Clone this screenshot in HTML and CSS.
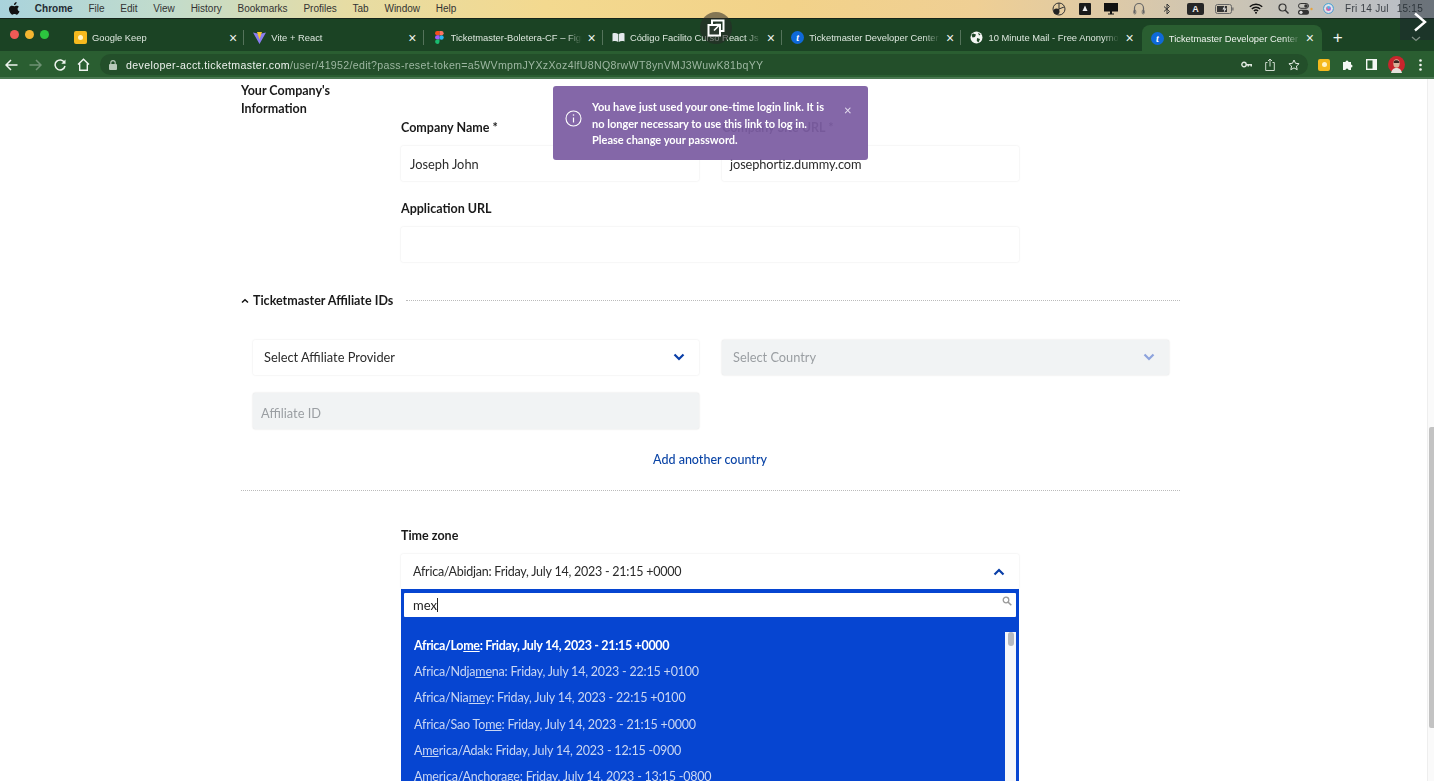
FILE: index.html
```html
<!DOCTYPE html>
<html lang="en">
<head>
<meta charset="utf-8">
<title>Ticketmaster Developer Center</title>
<link rel="stylesheet" href="styles.css">
</head>
<body>
<div class="screen">
  <header class="menubar">
    <nav class="menu-left">
      <svg class="apple" width="11" height="13" viewBox="0 0 12 14"><path d="M8.300 0c.1 1-.3 1.800-.8 2.400-.6.600-1.300 1-2.100.9-.1-.9.300-1.800.8-2.300C6.800.4 7.600 0 8.300 0zM11.500 10.200c-.3.700-.5 1-.9 1.600-.6.800-1.300 1.900-2.300 1.900-.9 0-1.100-.6-2.300-.6s-1.500.6-2.300.6c-1 0-1.700-1-2.300-1.800C-.2 9.500-.4 6.900.5 5.500c.6-1 1.700-1.600 2.700-1.600s1.700.6 2.600.6c.8 0 1.400-.6 2.600-.6.900 0 1.900.5 2.500 1.300-2.200 1.200-1.900 4.300.6 5z" fill="#111"/></svg>
      <b class="appname">Chrome</b>
      <span>File</span><span>Edit</span><span>View</span><span>History</span><span>Bookmarks</span><span>Profiles</span><span>Tab</span><span>Window</span><span>Help</span>
    </nav>
    <div class="menu-right">
      <svg class="st" width="14" height="14" viewBox="0 0 14 14"><circle cx="7" cy="7" r="6" fill="none" stroke="#333" stroke-width="1"/><path d="M7 1v6l5-2M7 7l-3 5" stroke="#333" fill="none"/><circle cx="4.500" cy="9.500" r="3" fill="#222"/></svg>
      <svg class="st" width="12" height="12" viewBox="0 0 12 12"><rect width="12" height="12" rx="1" fill="#1a1a1a"/><path d="M6 2.500 8.500 8h-5z" fill="#eee"/></svg>
      <svg class="st" width="14" height="12" viewBox="0 0 14 12"><path d="M0 0h14v8.500H8v2h2v1H4v-1h2v-2H0z" fill="#111"/></svg>
      <svg class="st" width="12" height="13" viewBox="0 0 12 13"><path d="M1.500 11V6a4.500 4.500 0 0 1 9 0v5" fill="none" stroke="#666" stroke-width="1.200"/><rect x=".8" y="8" width="2" height="4" rx="1" fill="none" stroke="#666" stroke-width=".8"/><rect x="9.200" y="8" width="2" height="4" rx="1" fill="none" stroke="#666" stroke-width=".8"/></svg>
      <svg class="st" width="8" height="12" viewBox="0 0 8 12"><path d="M1 3.500 6.500 8.500 4 11V1l2.500 2.500L1 8.500" fill="none" stroke="#333" stroke-width="1"/></svg>
      <span class="ime">A</span>
      <svg class="st" width="19" height="10" viewBox="0 0 19 10"><rect x=".5" y=".5" width="16" height="9" rx="2" fill="none" stroke="#666"/><rect x="2" y="2" width="10" height="6" fill="#333"/><rect x="17.300" y="3.500" width="1.200" height="3" fill="#666"/><path d="M10 1 7.500 5.500h2L8.500 9l3-4.500h-2z" fill="#eee"/></svg>
      <svg class="st" width="14" height="11" viewBox="0 0 14 11"><path d="M.8 3.800a9 9 0 0 1 12.400 0M2.800 6a6 6 0 0 1 8.400 0M4.900 8a3 3 0 0 1 4.200 0" fill="none" stroke="#111" stroke-width="1.400"/><circle cx="7" cy="9.800" r="1" fill="#111"/></svg>
      <svg class="st" width="11" height="11" viewBox="0 0 11 11"><circle cx="4.500" cy="4.500" r="3.500" fill="none" stroke="#333" stroke-width="1.200"/><path d="m7 7 3.500 3.500" stroke="#333" stroke-width="1.400"/></svg>
      <svg class="st" width="15" height="12" viewBox="0 0 15 12"><rect x=".5" y=".5" width="10" height="4.800" rx="2.400" fill="none" stroke="#333"/><circle cx="8" cy="3" r="1.800" fill="#333"/><rect y="6.800" width="11" height="5" rx="2.500" fill="#333"/><circle cx="3" cy="9.300" r="1.600" fill="#ddd"/><circle cx="13.500" cy="6" r="1.200" fill="#e8a33d"/></svg>
      <span class="siri"></span>
      <span class="clock"><span>Fri 14 Jul</span><span>15:15</span></span>
    </div>
  </header>

  <div class="tabstrip">
    <div class="lights"><i class="red"></i><i class="yellow"></i><i class="green"></i></div>
    <div class="tab"><span class="fav keep"><i></i></span><span class="title">Google Keep</span><span class="x">×</span></div>
    <div class="tab"><svg class="fav-svg" width="13" height="13" viewBox="0 0 13 13"><path d="M0 1.500 6.500 13 13 1.500 6.500 3z" fill="#8a7cf0"/><path d="M4 1h5L6.500 8.500z" fill="#f7c32e"/></svg><span class="title">Vite + React</span><span class="x">×</span></div>
    <div class="tab"><svg class="fav-svg" width="13" height="13" viewBox="0 0 9 13"><circle cx="6.500" cy="6.500" r="2.200" fill="#29b6f6"/><path d="M2.200 0H4.500v4.300H2.200a2.150 2.150 0 0 1 0-4.300z" fill="#f24e1e"/><path d="M4.500 0h2a2.150 2.150 0 0 1 0 4.300h-2z" fill="#ff7262"/><path d="M2.200 4.300H4.500v4.300H2.200a2.150 2.150 0 0 1 0-4.300z" fill="#a259ff"/><path d="M2.200 8.600H4.500v2.200a2.200 2.200 0 1 1-2.300-2.200z" fill="#1abc70"/></svg><span class="title">Ticketmaster-Boletera-CF – Figma</span><span class="x">×</span></div>
    <div class="tab"><svg class="fav-svg" width="13" height="13" viewBox="0 0 13 13"><path d="M.5 2.500C2.500 1.800 4.800 2 6.200 3v8C4.800 10 2.500 9.800.5 10.500zM12.500 2.500C10.500 1.800 8.200 2 6.800 3v8c1.400-1 3.700-1.200 5.700-.5z" fill="#e4e9ec"/></svg><span class="title">Código Facilito Curso React Js</span><span class="x">×</span></div>
    <div class="tab"><span class="tm">t</span><span class="title">Ticketmaster Developer Center</span><span class="x">×</span></div>
    <div class="tab"><svg class="fav-svg" width="13" height="13" viewBox="0 0 13 13"><circle cx="6.500" cy="6.500" r="6" fill="#f3f5f3"/><path d="M3 2.500 6 3.500 5 6 2.500 6.500 1.500 4zM7 7l3 1-1.500 3.500L6.800 10zM8 1.500l2.500 2L9 4.500z" fill="#1d4626"/></svg><span class="title">10 Minute Mail - Free Anonymous</span><span class="x">×</span></div>
    <div class="tab active"><span class="tm">t</span><span class="title">Ticketmaster Developer Center</span><span class="x">×</span></div>
    <span class="plus">+</span>
  </div>

  <div class="toolbar">
    <svg class="tb back" width="13" height="12" viewBox="0 0 13 12"><path d="M12.500 6H1.500M6 1 1 6l5 5" fill="none" stroke="#eef3ee" stroke-width="1.500"/></svg>
    <svg class="tb fwd" width="13" height="12" viewBox="0 0 13 12"><path d="M.5 6h11M7 1l5 5-5 5" fill="none" stroke="#6f9274" stroke-width="1.500"/></svg>
    <svg class="tb reload" width="12" height="12" viewBox="0 0 12 12"><path d="M10.500 3.500A5 5 0 1 0 11 7" fill="none" stroke="#eef3ee" stroke-width="1.500"/><path d="M11.500 .5v4.200H7.300z" fill="#eef3ee"/></svg>
    <svg class="tb home" width="13" height="13" viewBox="0 0 13 13"><path d="M1 6.500 6.500 1.200 12 6.500M2.700 5.500v6.800h7.600V5.500" fill="none" stroke="#eef3ee" stroke-width="1.400"/></svg>
    <div class="omnibox">
      <svg class="lock" width="8" height="10" viewBox="0 0 8 10"><rect y="4" width="8" height="6" rx="1" fill="#b9c9bb"/><path d="M1.800 4.500V2.800a2.200 2.200 0 0 1 4.400 0v1.700" fill="none" stroke="#b9c9bb" stroke-width="1.100"/></svg>
      <span class="url"><b>developer-acct.ticketmaster.com</b>/user/41952/edit?pass-reset-token=a5WVmpmJYXzXoz4lfU8NQ8rwWT8ynVMJ3WuwK81bqYY</span>
      <span class="omni-icons">
        <svg width="11" height="7" viewBox="0 0 11 7"><circle cx="3" cy="3.500" r="2.200" fill="none" stroke="#dfe8df" stroke-width="1.400"/><path d="M5 3h6v2.500H9.500V4.500H8v1H6.500V4.500H5z" fill="#dfe8df"/></svg>
        <svg width="10" height="13" viewBox="0 0 10 13"><path d="M2.500 4.500H.7v8h8.600v-8H7.500M5 8.500V1M3 3l2-2 2 2" fill="none" stroke="#cfdccf" stroke-width="1"/></svg>
        <svg width="12" height="12" viewBox="0 0 12 12"><path d="m6 1 1.500 3.300 3.600.4-2.700 2.400.8 3.600L6 8.900l-3.200 1.800.8-3.600L.9 4.700l3.600-.4z" fill="none" stroke="#e4ece4" stroke-width="1"/></svg>
      </span>
    </div>
    <div class="ext">
      <span class="fav keep big"><i></i></span>
      <svg width="12" height="12" viewBox="0 0 12 12"><path d="M1 3h2.500a1.500 1.500 0 1 1 3 0H9v2.500a1.500 1.500 0 1 1 0 3V11H6.500a1.500 1.500 0 1 0-3 0H1z" fill="#f4f7f4"/></svg>
      <svg width="11" height="11" viewBox="0 0 11 11"><rect x=".7" y=".7" width="9.600" height="9.600" fill="none" stroke="#f4f7f4" stroke-width="1.400"/><rect x="6.500" y="1" width="4" height="9" fill="#f4f7f4"/></svg>
      <svg class="avatar" width="17" height="17" viewBox="0 0 17 17"><circle cx="8.500" cy="8.500" r="8.500" fill="#c8252c"/><ellipse cx="8.500" cy="7.500" rx="3.200" ry="4.200" fill="#d9b49a"/><path d="M5.500 6c.5-2.500 5-2.500 6 0l-.5 1H6z" fill="#3a2620"/><path d="M3 17c1-4 3-5 5.500-5s4.500 1 5.500 5z" fill="#e5e2dc"/></svg>
      <svg class="dots-v" width="3" height="12" viewBox="0 0 3 12"><circle cx="1.500" cy="1.500" r="1.300" fill="#f4f7f4"/><circle cx="1.500" cy="6" r="1.300" fill="#f4f7f4"/><circle cx="1.500" cy="10.500" r="1.300" fill="#f4f7f4"/></svg>
    </div>
  </div>

  <main class="viewport">
    <div class="page">
      <form class="form">
        <section class="company">
          <h3 class="side-title">Your Company's<br>Information</h3>
          <div class="fields">
            <div class="two">
              <div class="field"><label>Company Name *</label><div class="input">Joseph John</div></div>
              <div class="field"><label>Company Site URL *</label><div class="input tight">josephortiz.dummy.com</div></div>
            </div>
            <div class="field url-field"><label>Application URL</label><div class="input"></div></div>
          </div>
        </section>

        <div class="collapse-head">
          <svg width="8" height="6" viewBox="0 0 8 6"><path d="M1 4.500 4 1.800l3 2.700" fill="none" stroke="#111" stroke-width="1.500"/></svg>
          <h3>Ticketmaster Affiliate IDs</h3>
          <span class="dots"></span>
        </div>

        <div class="affiliate">
          <div class="input select">Select Affiliate Provider
            <svg width="12" height="8" viewBox="0 0 12 8"><path d="m1.500 1.500 4.500 4.500 4.500-4.500" fill="none" stroke="#0a3fa8" stroke-width="2.200"/></svg>
          </div>
          <div class="input select disabled">Select Country
            <svg width="12" height="8" viewBox="0 0 12 8"><path d="m1.500 1.500 4.500 4.500 4.500-4.500" fill="none" stroke="#8da3dd" stroke-width="2.200"/></svg>
          </div>
          <div class="input disabled affil-id">Affiliate ID</div>
        </div>
        <a class="add-link">Add another country</a>
        <div class="dots rule"></div>

        <section class="tz">
          <label>Time zone</label>
          <div class="input select open"><span class="tz-value">Africa/Abidjan: Friday, July 14, 2023 - 21:15 +0000</span>
            <svg width="12" height="8" viewBox="0 0 12 8"><path d="m1.500 6.500 4.500-4.500 4.500 4.500" fill="none" stroke="#0a3fa8" stroke-width="2.200"/></svg>
          </div>
          <div class="drop">
            <div class="search"><span>mex</span><i class="caret"></i>
              <svg width="10" height="10" viewBox="0 0 10 10"><circle cx="4" cy="4" r="2.800" fill="none" stroke="#9a9a9a" stroke-width="1.300"/><path d="m6 6 3.300 3.300" stroke="#9a9a9a" stroke-width="1.600"/></svg>
            </div>
            <div class="results">
              <ul>
                <li class="on">Africa/Lo<u>me</u>: Friday, July 14, 2023 - 21:15 +0000</li>
                <li>Africa/Ndja<u>me</u>na: Friday, July 14, 2023 - 22:15 +0100</li>
                <li>Africa/Nia<u>me</u>y: Friday, July 14, 2023 - 22:15 +0100</li>
                <li>Africa/Sao To<u>me</u>: Friday, July 14, 2023 - 21:15 +0000</li>
                <li>A<u>me</u>rica/Adak: Friday, July 14, 2023 - 12:15 -0900</li>
                <li>A<u>me</u>rica/Anchorage: Friday, July 14, 2023 - 13:15 -0800</li>
              </ul>
              <div class="list-scroll"><i></i></div>
            </div>
          </div>
        </section>
      </form>
    </div>
    <div class="scrollbar"><i></i></div>

    <div class="toast">
      <svg width="17" height="17" viewBox="0 0 17 17"><circle cx="8.500" cy="8.500" r="7.500" fill="none" stroke="#fff" stroke-width="1.100"/><path d="M8.500 7.500v5" stroke="#fff" stroke-width="1.200"/><circle cx="8.500" cy="5" r=".8" fill="#fff"/></svg>
      <p>You have just used your one-time login link. It is no longer necessary to use this link to log in. Please change your password.</p>
      <span class="toast-x">×</span>
    </div>
  </main>

  <div class="popout">
    <svg width="18" height="18" viewBox="0 0 18 18"><rect x="5" y="1.500" width="11.500" height="10.500" fill="none" stroke="#fff" stroke-width="2"/><rect x="1.500" y="6" width="11.500" height="10.500" fill="#2d3a30" stroke="#fff" stroke-width="2"/><path d="M7 11.500 12.500 6M8.500 5.500h4.500V10" fill="none" stroke="#fff" stroke-width="1.600"/></svg>
  </div>
  <div class="next">
    <svg width="14" height="20" viewBox="0 0 14 20"><path d="m2 1.500 10 8.500-10 8.500" fill="none" stroke="#fff" stroke-width="2.400"/></svg>
    <svg class="next-sub" width="10" height="6" viewBox="0 0 10 6"><path d="m1 1 4 3.500L9 1" fill="none" stroke="#7f8f84" stroke-width="1.300"/></svg>
  </div>
</div>
</body>
</html>
```

FILE: styles.css
```css
* { box-sizing: border-box; }
html, body { margin: 0; padding: 0; height: 100%; overflow: hidden; background: #fff; }
body { font-family: "Lato", "Open Sans", sans-serif; color: #1d1d1d; }
/* The reference is a frame of a screen recording, so everything is slightly soft */
.screen { position: relative; width: 1434px; height: 781px; display: flex; flex-direction: column; overflow: hidden; filter: blur(.35px); }

/* macOS menu bar */
.menubar {
  height: 19px; flex: none; display: flex; justify-content: space-between; align-items: center;
  padding: 0 11px 1px 9px; border-bottom: 1px solid #15251a;
  background: linear-gradient(90deg, #a9d3dc 0, #c3dccb 12%, #e6dca4 24%, #f3d98f 38%, #f2d289 55%, #efcf94 68%, #dcc9a8 78%, #c3c2bb 90%, #b9bec8 100%);
  font: 10px "Liberation Sans", Arial, sans-serif; color: #333;
}
.menu-left { display: flex; align-items: center; gap: 15.800px; }
.apple { margin-right: -1px; }
.appname { font-weight: 700; color: #1f2a33; }
.menu-right { display: flex; align-items: center; }
.menu-right .st { flex: none; }
.menu-right > *:nth-child(1) { margin-right: 13px; }
.menu-right > *:nth-child(2) { margin-right: 13px; }
.menu-right > *:nth-child(3) { margin-right: 15px; }
.menu-right > *:nth-child(4) { margin-right: 18px; }
.menu-right > *:nth-child(5) { margin-right: 16px; }
.menu-right > *:nth-child(6) { margin-right: 11px; }
.menu-right > *:nth-child(7) { margin-right: 15px; }
.menu-right > *:nth-child(8) { margin-right: 15px; }
.menu-right > *:nth-child(9) { margin-right: 9px; }
.menu-right > *:nth-child(10) { margin-right: 10px; }
.menu-right > *:nth-child(11) { margin-right: 11px; }
.ime { width: 17px; height: 12px; border-radius: 2px; background: #262626; color: #eee; font-size: 9px; font-weight: 700; line-height: 12px; text-align: center; }
.siri { width: 11px; height: 11px; border-radius: 50%; background: conic-gradient(#4fb7e8, #b25fd9, #e5688f, #4fb7e8); box-shadow: inset 0 0 0 2px #dfe4ea; border: 1px solid #4da8d2; }
.clock { display: flex; gap: 8px; letter-spacing: .25px; color: #3b4046; }

/* Tabs */
.tabstrip { height: 32px; flex: none; display: flex; align-items: stretch; padding-left: 65px; background: #1b4324; position: relative; }
.lights { position: absolute; left: 10px; top: 11px; display: flex; gap: 6px; }
.lights i { width: 9px; height: 9px; border-radius: 50%; }
.red { background: #ef5a56; } .yellow { background: #f4b631; } .green { background: #2cc63f; }
.tab { width: 179.300px; flex: none; display: flex; align-items: center; padding: 5px 0 0 9px; position: relative; font: 9.400px "Liberation Sans", Arial, sans-serif; color: #dde7de; }
.tab::after { content: ""; position: absolute; right: 0; top: 11px; height: 15px; width: 1px; background: #55735b; }
.tab:nth-child(7)::after, .tab.active::after { display: none; }
.tab.active { background: #2a5e31; border-radius: 8px 8px 0 0; margin-top: 6px; padding-top: 0; width: 180px; margin-left: 1px; color: #eef3ee; }
.title { width: 131px; overflow: hidden; white-space: nowrap; margin-left: 5px; -webkit-mask-image: linear-gradient(90deg, #000 88%, transparent); mask-image: linear-gradient(90deg, #000 88%, transparent); }
.x { width: 12px; margin-left: 4px; font-size: 14px; line-height: 14px; text-align: center; color: #eef3ee; }
.fav, .tm, .fav-svg { width: 13px; height: 13px; flex: none; }
.fav { display: inline-flex; align-items: center; justify-content: center; border-radius: 2px; }
.keep { background: #f5b91e; }
.keep i { width: 5px; height: 5px; border-radius: 50%; background: #fff3c8; }
.keep.big { width: 12px; height: 12px; }
.tm { border-radius: 50%; background: #0f69d8; color: #fff; font: italic 700 10px/13px "Liberation Serif", serif; text-align: center; }
.plus { margin: 3px 0 0 11px; font: 300 17px/32px "Liberation Sans", Arial, sans-serif; color: #f2f6f2; }

/* Toolbar */
.toolbar { height: 28px; flex: none; display: flex; align-items: center; padding: 1px 9px 0 5px; background: #2a5e31; border-bottom: 2px solid #4a7851; }
.tb { flex: none; }
.back { margin-right: 11px; } .fwd { margin-right: 12px; } .reload { margin-right: 11px; } .home { margin-right: 10px; }
.omnibox { flex: none; width: 1208px; height: 21px; display: flex; align-items: center; border-radius: 11px; background: #234f2a; padding-left: 9px; font: 10.600px "Liberation Sans", Arial, sans-serif; color: #9eb7a2; }
.lock { flex: none; margin-right: 9px; }
.url { white-space: nowrap; letter-spacing: .32px; }
.url b { font-weight: 400; color: #eef3ee; letter-spacing: .39px; }
.omni-icons { margin-left: auto; margin-right: 8px; display: flex; align-items: center; gap: 13px; }
.ext { margin-left: 10px; display: flex; align-items: center; gap: 12px; }
.avatar { margin-left: -1px; }
.dots-v { margin-left: 2px; }

/* Page */
.viewport { flex: 1; min-height: 0; display: flex; position: relative; background: #fff; }
.page { flex: 1; min-width: 0; overflow: hidden; padding: 3px 0 0 241px; }
.form { width: 939px; }
.scrollbar { width: 7px; flex: none; background: #fafafa; border-left: 1px solid #eee; padding: 348px 0 0 1px; }
.scrollbar i { display: block; height: 301px; background: #c3c3c3; border-radius: 2px 0 0 2px; }

h3, label { margin: 0; display: block; font-size: 12.500px; line-height: 18px; font-weight: 700; color: #1a1a1a; }
.company { display: flex; }
.side-title { width: 160px; flex: none; }
.fields { width: 618px; padding-top: 37px; }
.two { display: grid; grid-template-columns: 298px 297px; gap: 23px; }
.field label { margin-bottom: 9px; }
.url-field { margin-top: 19px; }
.input { height: 35px; display: flex; align-items: center; padding: 1px 9px 0; border-radius: 2px; background: #fff; box-shadow: 0 0 2px rgba(0, 0, 0, .12); font-size: 12.800px; color: #2b2b2b; }
.tight { padding-left: 8px; letter-spacing: -.1px; }
.select { justify-content: space-between; padding: 0 14px 2px 11px; }
.disabled { background: #f1f3f4; color: #9a9ea2; box-shadow: 0 0 2px rgba(0, 0, 0, .16); }

.collapse-head { display: flex; align-items: center; margin-top: 30px; }
.collapse-head h3 { margin: 0 13px 0 4px; }
.collapse-head .dots { margin-top: -2px; }
.dots { flex: 1; border-top: 1px dotted #bbb; }
.affiliate { display: grid; grid-template-columns: 446px 447px; column-gap: 23px; row-gap: 18px; margin: 30px 0 0 12px; }
.affil-id { grid-column: 1; padding: 3px 8px 0; height: 36px; }
.add-link { display: block; margin: 22px 0 0 160px; width: 618px; text-align: center; font-size: 12.500px; line-height: 18px; font-weight: 500; color: #0a44a6; }
.rule { margin-top: 21px; }

.tz { width: 618px; margin: 36px 0 0 160px; }
.tz > label { margin-bottom: 9px; }
.open { padding: 0 14px 0 12px; }
.tz-value { font-size: 12.500px; letter-spacing: -.24px; }
.drop { border: 3px solid #0645d1; border-top-width: 4px; background: #0645d1; }
.search { height: 24px; display: flex; align-items: center; padding: 0 4px 0 9px; background: #fff; border-radius: 1px; font-size: 13px; color: #222; }
.caret { width: 1px; height: 14px; background: #222; }
.search svg { margin-left: auto; margin-top: -9px; }
.results { display: flex; justify-content: space-between; padding-top: 15px; height: 200px; }
.results ul { list-style: none; margin: 0; padding: 1px 0 0 10px; font-size: 12.500px; letter-spacing: -.2px; line-height: 26.200px; color: #c9d6f3; }
.results li { white-space: nowrap; }
.results li.on { color: #fff; font-weight: 700; letter-spacing: -.34px; }
.list-scroll { width: 11px; background: #f4f6fb; }
.list-scroll i { display: block; width: 6px; height: 14px; margin-left: 3px; border-radius: 3px; background: #b5b8bf; }

.toast { position: absolute; left: 553px; top: 7px; width: 315px; height: 74px; display: flex; align-items: flex-start; padding: 13px 11px 0 12px; border-radius: 3px; background: rgba(124, 94, 163, .94); color: #fff; }
.toast svg { flex: none; margin: 11px 10px 0 0; }
.toast p { margin: 0; width: 238px; font-size: 11px; line-height: 16.500px; font-weight: 700; }
.toast-x { margin: 4px 0 0 14px; font-size: 13px; line-height: 14px; color: #e6dff0; }

/* Overlays from the recording */
.popout { position: absolute; left: 700px; top: 12px; width: 32px; height: 32px; display: flex; align-items: center; justify-content: center; border-radius: 50%; background: rgba(40, 40, 40, .55); }
.next { position: absolute; right: 0; top: 0; width: 34px; height: 40px; padding: 12px 0 0 13px; background: rgba(30, 40, 45, .5); }
.next svg { display: block; }
.next-sub { margin: 4px 0 0 -2px; }
```
